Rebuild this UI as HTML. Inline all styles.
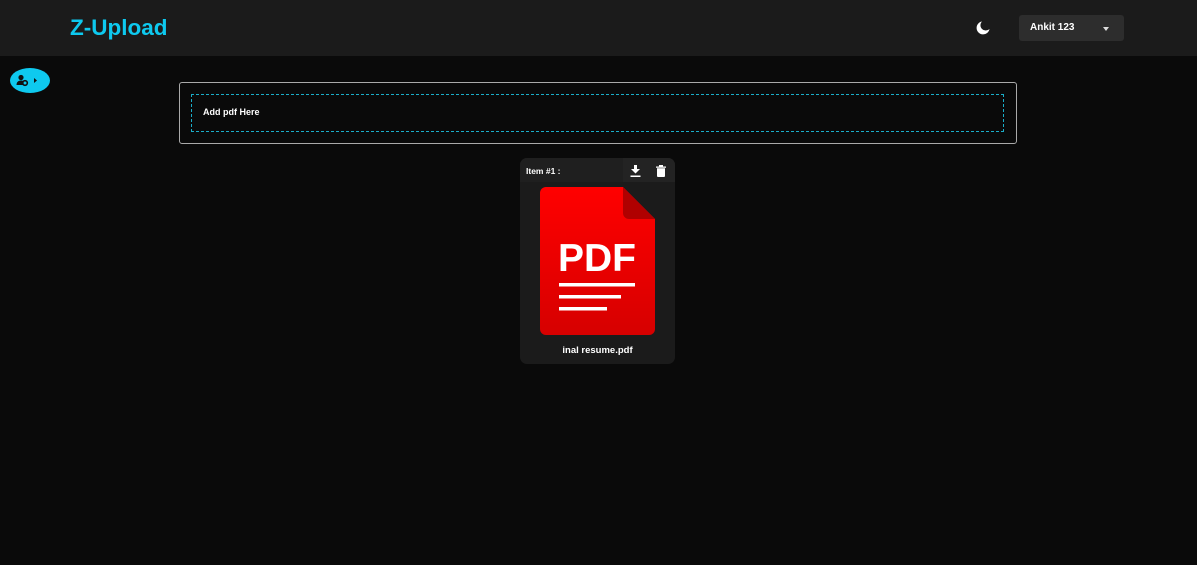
<!DOCTYPE html>
<html><head><style>
body{margin:0;width:1197px;height:565px;background:#0a0a0a;font-family:"Liberation Sans",sans-serif;overflow:hidden;position:relative}
.nav{position:absolute;left:0;top:0;width:1197px;height:56px;background:#1b1b1b}
.logo{position:absolute;left:70px;top:15px;color:#0ec9ef;font-weight:bold;font-size:22.5px}
.user{position:absolute;left:1019px;top:15px;width:105px;height:26px;background:#2d2d2d;border-radius:3px;color:#fff;font-size:10px;font-weight:bold}
.user span{position:absolute;left:11px;top:7px}
.tri{position:absolute;left:84px;top:12px;border-left:3.5px solid transparent;border-right:3.5px solid transparent;border-top:4px solid #ddd}
.pill{position:absolute;left:10px;top:68px;width:40px;height:25px;border-radius:50%;background:#0ec9ef}
.box{position:absolute;left:179px;top:82px;width:836px;height:60px;border:1px solid #aaa;border-radius:3px}
.dash{position:absolute;left:11px;top:11px;width:811px;height:36px;border:1px dashed #1aaec9}
.dash span{position:absolute;left:11px;top:12px;color:#fff;font-size:9px;font-weight:bold}
.card{position:absolute;left:520px;top:158px;width:155px;height:206px;background:#1b1b1b;border-radius:7px;overflow:hidden}
.hd{position:absolute;left:0;top:0;width:155px;height:24px;background:#1f1f1f}
.hd2{position:absolute;left:103px;top:0;width:52px;height:24px;background:#232323}
.it{position:absolute;left:6px;top:8px;color:#fff;font-size:8.5px;font-weight:bold}
.fn{position:absolute;left:0;width:155px;top:187px;text-align:center;color:#fff;font-size:9.5px;font-weight:bold}
</style></head><body>
<div class="nav"><div class="logo">Z-Upload</div>
<svg style="position:absolute;left:975px;top:20px" width="16" height="16" viewBox="0 0 16 16"><path d="M7 1.5A6.5 6.5 0 1 0 14.5 9 5 5 0 0 1 7 1.5z" fill="#fff"/></svg>
<div class="user"><span>Ankit 123</span><div class="tri"></div></div></div>
<div class="pill"><svg style="position:absolute;left:6px;top:6px" width="22" height="13" viewBox="0 0 22 13"><circle cx="5" cy="3.5" r="2.6" fill="#111"/><path d="M0.5 11c0-3 2-4.5 4.5-4.5 1 0 2 .3 2.6.8V11z" fill="#111"/><circle cx="9" cy="9" r="2.3" fill="none" stroke="#111" stroke-width="1.6"/><path d="M18 4l3 2.5-3 2.5z" fill="#111"/></svg></div>
<div class="box"><div class="dash"><span>Add pdf Here</span></div></div>
<div class="card"><div class="hd"></div><div class="hd2"></div><div class="it">Item #1 :</div>
<svg style="position:absolute;left:110px;top:7px" width="11" height="12" viewBox="0 0 11 12"><path d="M4 0h3v4h3L5.5 8.5 1 4h3z M0.5 10.5h10v1.5H0.5z" fill="#fff"/></svg>
<svg style="position:absolute;left:136px;top:7px" width="10" height="12" viewBox="0 0 10 12"><path d="M0 1.5h10v1.3H0z M3 0h4v1.5H3z M1 3.3h8V11a1 1 0 0 1-1 1H2a1 1 0 0 1-1-1z" fill="#fff"/></svg>
<svg style="position:absolute;left:20px;top:29px" width="115" height="148" viewBox="0 0 115 148"><defs><linearGradient id="g" x1="0" y1="0" x2="0" y2="1"><stop offset="0" stop-color="#ff0000"/><stop offset="1" stop-color="#d60000"/></linearGradient></defs><path d="M6 0H83L115 32V142a6 6 0 0 1-6 6H6a6 6 0 0 1-6-6V6a6 6 0 0 1 6-6z" fill="url(#g)"/><path d="M83 0L115 32H89a6 6 0 0 1-6-6z" fill="#b00000"/><text x="57" y="84" text-anchor="middle" fill="#fff" font-family="Liberation Sans" font-weight="bold" font-size="39" textLength="78" lengthAdjust="spacingAndGlyphs">PDF</text><rect x="19" y="96" width="76" height="3.5" fill="#fff"/><rect x="19" y="108" width="62" height="3.5" fill="#fff"/><rect x="19" y="120" width="48" height="3.5" fill="#fff"/></svg>
<div class="fn">inal resume.pdf</div></div>
</body></html>
